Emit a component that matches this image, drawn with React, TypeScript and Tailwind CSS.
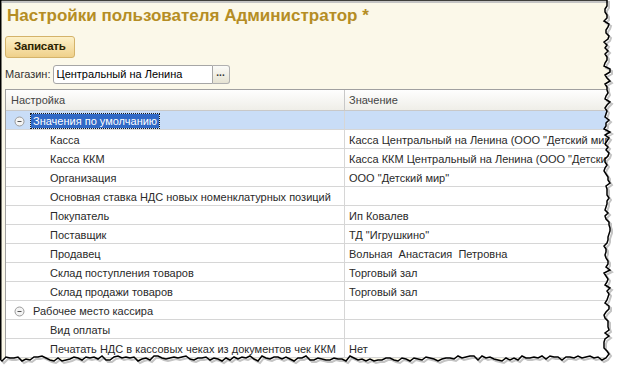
const rows: { label: string; value: string; level: number; group?: boolean; selected?: boolean }[] = [
  { label: "Значения по умолчанию", value: "", level: 0, group: true, selected: true },
  { label: "Касса", value: 'Касса Центральный на Ленина (ООО "Детский мир")', level: 1 },
  { label: "Касса ККМ", value: 'Касса ККМ Центральный на Ленина (ООО "Детский мир")', level: 1 },
  { label: "Организация", value: 'ООО "Детский мир"', level: 1 },
  { label: "Основная ставка НДС новых номенклатурных позиций", value: "", level: 1 },
  { label: "Покупатель", value: "Ип Ковалев", level: 1 },
  { label: "Поставщик", value: 'ТД "Игрушкино"', level: 1 },
  { label: "Продавец", value: "Вольная  Анастасия  Петровна", level: 1 },
  { label: "Склад поступления товаров", value: "Торговый зал", level: 1 },
  { label: "Склад продажи товаров", value: "Торговый зал", level: 1 },
  { label: "Рабочее место кассира", value: "", level: 0, group: true },
  { label: "Вид оплаты", value: "", level: 1 },
  { label: "Печатать НДС в кассовых чеках из документов чек ККМ", value: "Нет", level: 1 },
];

function Collapse() {
  return (
    <svg width="11" height="11" viewBox="0 0 11 11" className="shrink-0">
      <circle cx="5.5" cy="5.5" r="4.5" fill="#f4f4f4" stroke="#9a9a9a" strokeWidth="1" />
      <path d="M3.5 5.5h4" stroke="#555" strokeWidth="1" />
    </svg>
  );
}

// jagged torn edge, computed once
function tornPath() {
  let seed = 7;
  const rnd = () => {
    seed = (seed * 9301 + 49297) % 233280;
    return seed / 233280;
  };
  const pts: [number, number][] = [[0, 0], [607, 0]];
  for (let y = 3; y < 356; y += 3) pts.push([604 + Math.round(rnd() * 6), y]);
  pts.push([606, 358]);
  for (let x = 602; x > 0; x -= 4) pts.push([x, 356 + Math.round(rnd() * 5)]);
  pts.push([0, 359]);
  return pts;
}

function TornEdge() {
  const pts = tornPath();
  const line = pts.map((p, i) => `${i ? "L" : "M"}${p[0]} ${p[1]}`).join(" ");
  const mask = `M0 0 H620 V366 H0 Z ${line} Z`;
  return (
    <svg width="620" height="366" className="absolute inset-0 pointer-events-none">
      <path d={mask} fill="white" fillRule="evenodd" />
      <path d={line} fill="none" stroke="#c4c4c4" strokeWidth="2" transform="translate(2 2)" />
      <path d={line} fill="none" stroke="#000" strokeWidth="1.5" />
      <path d="M0.75 0 V359" stroke="#000" strokeWidth="1.5" />
    </svg>
  );
}

export default function App() {
  return (
    <div className="relative w-[620px] h-[366px] overflow-hidden bg-white font-['Liberation_Sans',Arial,sans-serif]">
      <div className="w-[612px] h-[362px] bg-[#fbf8e9] pt-[5px] overflow-hidden">
        <div className="pl-[7px] text-[17px] font-bold leading-[22px] text-[#b58d24]">
          Настройки пользователя Администратор *
        </div>
        <div className="pl-[5px] mt-[6px]">
          <button className="h-[22px] px-[8px] rounded-[3px] border border-[#d4b36a] bg-gradient-to-b from-[#fdf1c8] to-[#efd08a] text-[11.5px] font-bold text-[#2b2200] tracking-[-0.2px]">
            Записать
          </button>
        </div>
        <div className="flex items-center pl-[5px] mt-[7px] h-[19px]">
          <span className="text-[11px] text-[#333] mr-[2px]">Магазин:</span>
          <div className="flex h-[19px]">
            <div className="w-[160px] border border-[#a6a6a6] rounded-l-[3px] bg-white text-[11px] text-black pl-[3px] leading-[17px]">
              Центральный на Ленина
            </div>
            <div className="w-[17px] border border-l-0 border-[#b0b0b0] rounded-r-[3px] bg-gradient-to-b from-[#fbfbf8] to-[#e6e3d3] text-[10px] font-bold leading-[14px] text-center text-[#333]">
              ...
            </div>
          </div>
        </div>
        <div className="ml-[5px] mt-[5px] w-[640px] border-l border-t border-[#a0a0a0] bg-white text-[11px] text-[#2a2a2a]">
          <div className="flex h-[21px] border-b border-[#c8c8c8] bg-gradient-to-b from-[#fefefe] to-[#efeee8] text-[#444]">
            <div className="w-[339px] pl-[5px] leading-[21px] border-r border-[#c8c8c8]">Настройка</div>
            <div className="pl-[4px] leading-[21px]">Значение</div>
          </div>
          {rows.map((r) => (
            <div
              key={r.label}
              className={`flex h-[19px] border-b border-[#d6d6d6] ${r.selected ? "bg-[#c9ddf7]" : ""}`}
            >
              <div className="w-[339px] flex items-center pt-[3px] border-r border-[#d6d6d6] whitespace-nowrap overflow-hidden">
                {r.group ? (
                  <>
                    <span className="ml-[8px] mr-[6px] flex"><Collapse /></span>
                    <span
                      className={
                        r.selected
                          ? "bg-[#3169c6] text-white px-[2px] outline-1 outline-dotted outline-[#1a1a1a] leading-[14px]"
                          : "pl-[2px]"
                      }
                    >
                      {r.label}
                    </span>
                  </>
                ) : (
                  <span className="pl-[44px]">{r.label}</span>
                )}
              </div>
              <div className="flex-1 flex items-center pt-[3px] pl-[4px] whitespace-pre overflow-hidden">{r.value}</div>
            </div>
          ))}
        </div>
      </div>
      <TornEdge />
    </div>
  );
}
